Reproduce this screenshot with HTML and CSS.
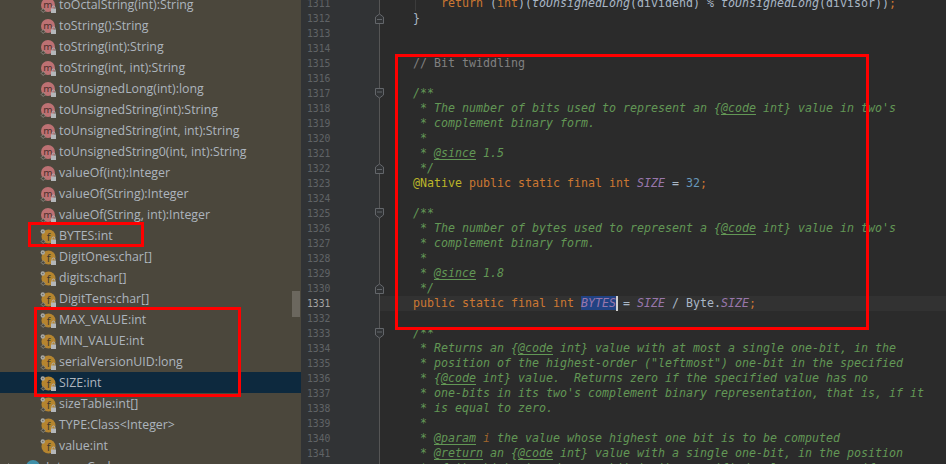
FILE: index.html
```html
<!DOCTYPE html>
<html lang="en">
<head>
<meta charset="utf-8">
<title>Integer.java</title>
<link rel="stylesheet" href="styles.css">
</head>
<body>
<svg class="defs" width="0" height="0" aria-hidden="true">
  <defs>
    <g id="lock">
      <rect x="11" y="12.500" width="5" height="4.500" fill="#b4b7ba"/>
      <path d="M12 12.500 V11.500 a1.500 1.500 0 0 1 3 0 V12.500" fill="none" stroke="#b4b7ba" stroke-width="0.900"/>
    </g>
    <g id="static">
      <path d="M3.200 12.500 L5.200 14.500 L3.200 16.500 L1.200 14.500 Z" fill="#4b473c" stroke="#8f8f88" stroke-width="0.900"/>
    </g>
    <g id="pin">
      <circle cx="2.800" cy="4.500" r="2.200" fill="#a9a9a4"/>
      <circle cx="2.800" cy="4.500" r="0.800" fill="#6c6a62"/>
    </g>
    <symbol id="icon-m" viewBox="0 0 17 17">
      <circle cx="8" cy="9" r="7" fill="#bd7173"/>
      <text x="8" y="12" text-anchor="middle" class="letter-m">m</text>
      <use href="#static"/>
      <use href="#lock"/>
    </symbol>
    <symbol id="icon-f" viewBox="0 0 17 17">
      <circle cx="8.500" cy="9.500" r="7" fill="#b5852f"/>
      <text x="8.500" y="13.500" text-anchor="middle" class="letter-f">f</text>
      <use href="#pin"/>
      <use href="#static"/>
      <use href="#lock"/>
    </symbol>
    <symbol id="icon-f-plain" viewBox="0 0 17 17">
      <circle cx="8.500" cy="9.500" r="7" fill="#b5852f"/>
      <text x="8.500" y="13.500" text-anchor="middle" class="letter-f">f</text>
      <use href="#pin"/>
      <use href="#lock"/>
    </symbol>
    <symbol id="fold-start" viewBox="0 0 9 11">
      <path d="M0.500 0.500 H8.500 V7 L4.500 10 L0.500 7 Z" fill="#313335" stroke="#63666a"/>
      <path d="M2 4 H7" stroke="#63666a"/>
    </symbol>
    <symbol id="fold-end" viewBox="0 0 9 11">
      <path d="M0.500 10.500 H8.500 V4 L4.500 1 L0.500 4 Z" fill="#313335" stroke="#63666a"/>
      <path d="M2 6.500 H7" stroke="#63666a"/>
    </symbol>
  </defs>
</svg>

<div class="app">
  <aside class="structure">
    <ul class="members">
      <li class="member"><svg class="icon"><use href="#icon-m"/></svg>toOctalString(int):String</li>
      <li class="member"><svg class="icon"><use href="#icon-m"/></svg>toString():String</li>
      <li class="member"><svg class="icon"><use href="#icon-m"/></svg>toString(int):String</li>
      <li class="member"><svg class="icon"><use href="#icon-m"/></svg>toString(int, int):String</li>
      <li class="member"><svg class="icon"><use href="#icon-m"/></svg>toUnsignedLong(int):long</li>
      <li class="member"><svg class="icon"><use href="#icon-m"/></svg>toUnsignedString(int):String</li>
      <li class="member"><svg class="icon"><use href="#icon-m"/></svg>toUnsignedString(int, int):String</li>
      <li class="member"><svg class="icon"><use href="#icon-m"/></svg>toUnsignedString0(int, int):String</li>
      <li class="member"><svg class="icon"><use href="#icon-m"/></svg>valueOf(int):Integer</li>
      <li class="member"><svg class="icon"><use href="#icon-m"/></svg>valueOf(String):Integer</li>
      <li class="member"><svg class="icon"><use href="#icon-m"/></svg>valueOf(String, int):Integer</li>
      <li class="member"><svg class="icon"><use href="#icon-f"/></svg>BYTES:int</li>
      <li class="member"><svg class="icon"><use href="#icon-f"/></svg>DigitOnes:char[]</li>
      <li class="member"><svg class="icon"><use href="#icon-f"/></svg>digits:char[]</li>
      <li class="member"><svg class="icon"><use href="#icon-f"/></svg>DigitTens:char[]</li>
      <li class="member"><svg class="icon"><use href="#icon-f"/></svg>MAX_VALUE:int</li>
      <li class="member"><svg class="icon"><use href="#icon-f"/></svg>MIN_VALUE:int</li>
      <li class="member"><svg class="icon"><use href="#icon-f"/></svg>serialVersionUID:long</li>
      <li class="member selected"><svg class="icon"><use href="#icon-f"/></svg>SIZE:int</li>
      <li class="member"><svg class="icon"><use href="#icon-f"/></svg>sizeTable:int[]</li>
      <li class="member"><svg class="icon"><use href="#icon-f"/></svg>TYPE:Class&lt;Integer&gt;</li>
      <li class="member"><svg class="icon"><use href="#icon-f-plain"/></svg>value:int</li>
      <li class="member nested"><span class="arrow"></span><span class="class-dot"></span>IntegerCache</li>
    </ul>
    <div class="thumb"></div>
  </aside>

  <main class="editor">
    <div class="row"><span class="num">1311</span><span class="code">    <i class="guide"></i><b class="k">return</b> (<b class="k">int</b>)(<em>toUnsignedLong</em>(dividend) % <em>toUnsignedLong</em>(divisor))<b class="k">;</b></span></div>
    <div class="row"><span class="num">1312</span><svg class="fold"><use href="#fold-end"/></svg><span class="code">}</span></div>
    <div class="row"><span class="num">1313</span></div>
    <div class="row"><span class="num">1314</span></div>
    <div class="row"><span class="num">1315</span><span class="code c">// Bit twiddling</span></div>
    <div class="row"><span class="num">1316</span></div>
    <div class="row"><span class="num">1317</span><svg class="fold"><use href="#fold-start"/></svg><span class="code d">/**</span></div>
    <div class="row"><span class="num">1318</span><span class="code d"> * The number of bits used to represent an {<u>@code</u> int} value in two's</span></div>
    <div class="row"><span class="num">1319</span><span class="code d"> * complement binary form.</span></div>
    <div class="row"><span class="num">1320</span><span class="code d"> *</span></div>
    <div class="row"><span class="num">1321</span><span class="code d"> * <u>@since</u> 1.5</span></div>
    <div class="row"><span class="num">1322</span><svg class="fold"><use href="#fold-end"/></svg><span class="code d"> */</span></div>
    <div class="row"><span class="num">1323</span><span class="code"><span class="a">@Native</span> <b class="k">public static final int</b> <em class="f">SIZE</em> = <span class="n">32</span><b class="k">;</b></span></div>
    <div class="row"><span class="num">1324</span></div>
    <div class="row"><span class="num">1325</span><svg class="fold"><use href="#fold-start"/></svg><span class="code d">/**</span></div>
    <div class="row"><span class="num">1326</span><span class="code d"> * The number of bytes used to represent a {<u>@code</u> int} value in two's</span></div>
    <div class="row"><span class="num">1327</span><span class="code d"> * complement binary form.</span></div>
    <div class="row"><span class="num">1328</span><span class="code d"> *</span></div>
    <div class="row"><span class="num">1329</span><span class="code d"> * <u>@since</u> 1.8</span></div>
    <div class="row"><span class="num">1330</span><svg class="fold"><use href="#fold-end"/></svg><span class="code d"> */</span></div>
    <div class="row current"><span class="num">1331</span><span class="code"><b class="k">public static final int</b> <em class="f sel">BYTES</em><i class="caret"></i> = <em class="f">SIZE</em> / Byte.<em class="f">SIZE</em><b class="k">;</b></span></div>
    <div class="row"><span class="num">1332</span></div>
    <div class="row"><span class="num">1333</span><svg class="fold"><use href="#fold-start"/></svg><span class="code d">/**</span></div>
    <div class="row"><span class="num">1334</span><span class="code d"> * Returns an {<u>@code</u> int} value with at most a single one-bit, in the</span></div>
    <div class="row"><span class="num">1335</span><span class="code d"> * position of the highest-order ("leftmost") one-bit in the specified</span></div>
    <div class="row"><span class="num">1336</span><span class="code d"> * {<u>@code</u> int} value.  Returns zero if the specified value has no</span></div>
    <div class="row"><span class="num">1337</span><span class="code d"> * one-bits in its two's complement binary representation, that is, if it</span></div>
    <div class="row"><span class="num">1338</span><span class="code d"> * is equal to zero.</span></div>
    <div class="row"><span class="num">1339</span><span class="code d"> *</span></div>
    <div class="row"><span class="num">1340</span><span class="code d"> * <u>@param</u> <span class="p">i</span> the value whose highest one bit is to be computed</span></div>
    <div class="row"><span class="num">1341</span><span class="code d"> * <u>@return</u> an {<u>@code</u> int} value with a single one-bit, in the position</span></div>
    <div class="row"><span class="num">1342</span><span class="code d"> * of the highest-order one-bit in the specified value, or zero if</span></div>
  </main>

  <div class="mark mark-bytes"></div>
  <div class="mark mark-fields"></div>
  <div class="mark mark-code"></div>
</div>
</body>
</html>
```
FILE: styles.css
```css
html, body {
  margin: 0;
  padding: 0;
  height: 100%;
  overflow: hidden;
  background: #2b2b2b;
}
.defs { position: absolute; }
.app {
  position: relative;
  display: flex;
  width: 946px;
  height: 464px;
  overflow: hidden;
}

/* structure tool window */
.structure {
  position: relative;
  flex: 0 0 301px;
  height: 464px;
  background: #4b473c;
  overflow: hidden;
}
.members {
  list-style: none;
  margin: -6px 0 0;
  padding: 0;
}
.member {
  display: flex;
  align-items: center;
  gap: 2px;
  height: 21px;
  padding-left: 40px;
  font: 12.35px/21px "Open Sans", sans-serif;
  color: #adb5be;
  white-space: nowrap;
}
.selected { background: #0d293e; }
.icon {
  flex: none;
  width: 17px;
  height: 17px;
}
.letter-m {
  font: 9.5px "DejaVu Sans", sans-serif;
  fill: #4a2f2c;
}
.letter-f {
  font: 10.5px "DejaVu Sans", sans-serif;
  fill: #40392f;
}
.nested { padding-left: 8px; }
.arrow {
  width: 0;
  height: 0;
  margin-right: 11px;
  border-left: 5px solid #9a9a94;
  border-top: 4px solid transparent;
  border-bottom: 4px solid transparent;
}
.class-dot {
  width: 14px;
  height: 14px;
  margin-right: 4px;
  border-radius: 50%;
  background: #3f8fa8;
}
.thumb {
  position: absolute;
  left: 292px;
  top: 291px;
  width: 8px;
  height: 26px;
  background: #6b675e;
}

/* editor */
.editor {
  flex: 1;
  margin-top: -4px;
  background: linear-gradient(to right, #313335 0, #313335 78px, #555555 78px, #555555 79px, #2b2b2b 79px);
}
.row {
  display: flex;
  align-items: center;
  position: relative;
  height: 15px;
  font: 11.63px/15px "DejaVu Sans Mono", monospace;
  white-space: pre;
}
.num {
  position: absolute;
  left: 6px;
  font-size: 9.7px;
  color: #606366;
}
.fold {
  position: absolute;
  left: 74px;
  top: 2px;
  width: 9px;
  height: 11px;
}
.code {
  margin-left: 112px;
  color: #a9b7c6;
}
.code b { font-weight: normal; }
.k { color: #cc7832; }
.c { color: #808080; }
.d { color: #629755; font-style: italic; }
.d u { text-underline-offset: 2px; }
.a { color: #bbb529; }
.n { color: #6897bb; }
.p { color: #a0652c; }
.f { color: #9876aa; }
.sel { background: #214283; }
.guide {
  position: absolute;
  left: 114px;
  top: 0;
  width: 1px;
  height: 15px;
  background: #3c3c3c;
}
.caret {
  display: inline-block;
  width: 2px;
  height: 15px;
  margin-right: -2px;
  vertical-align: top;
  background: #d0d0d0;
}
.current {
  background: linear-gradient(to right, transparent 79px, #323232 79px);
}
.current .num { color: #a4a3a3; }

/* red annotation boxes drawn over the screenshot */
.mark {
  position: absolute;
  box-sizing: border-box;
  border: 3px solid #ff0000;
}
.mark-bytes { left: 28px; top: 222px; width: 116px; height: 25px; }
.mark-fields { left: 34px; top: 307px; width: 207px; height: 90px; }
.mark-code { left: 395px; top: 54px; width: 474px; height: 276px; }
```
